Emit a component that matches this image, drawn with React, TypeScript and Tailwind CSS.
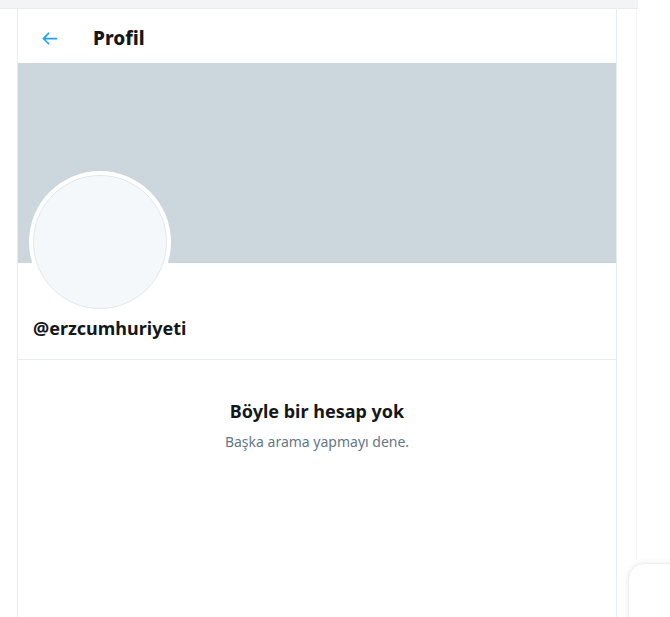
export default function App() {
  return (
    <div className="relative h-[617px] w-[670px] overflow-hidden bg-white" style={{ fontFamily: '"Noto Sans", "Open Sans", sans-serif' }}>
      <div className="h-[9px] w-[638px] border-b border-[#e6ecf0] bg-[#f2f4f6]" />
      <div className="ml-[17px] flex h-[608px] w-[600px] flex-col border-x border-[#e6ecf0]">
        <div className="flex h-[54px] items-center gap-[33px] px-[21px] pt-[4px]">
          <svg viewBox="0 0 24 24" className="h-[21px] w-[21px] text-[#1da1f2]" fill="currentColor">
            <path d="M20 11H7.414l4.293-4.293a1 1 0 0 0-1.414-1.414l-6 6a1 1 0 0 0 0 1.414l6 6a1 1 0 0 0 1.414-1.414L7.414 13H20a1 1 0 1 0 0-2z" />
          </svg>
          <span className="text-[19px] font-extrabold text-[#14171a]">Profil</span>
        </div>
        <div className="h-[200px] bg-[#ccd6dd]" />
        <div className="border-b border-[#e6ecf0] px-[11px] pb-[19px]">
          <div className="-mt-[92px] h-[142px] w-[142px] rounded-full bg-white p-[4px]">
            <div className="h-full w-full rounded-full border border-[#e1e8ed] bg-[#f5f8fa]" />
          </div>
          <div className="mt-[3px] pl-[4px] text-[18px] font-bold leading-[24px] text-[#14171a]">@erzcumhuriyeti</div>
        </div>
        <div className="flex flex-col items-center pt-[37px]">
          <div className="text-[18px] font-bold leading-[28px] text-[#14171a]">Böyle bir hesap yok</div>
          <div className="mt-[7px] text-[14px] leading-[20px] text-[#657786]">Başka arama yapmayı dene.</div>
        </div>
      </div>
      <div className="absolute left-[636px] top-[10px] h-[550px] w-px bg-[#f2f4f6]" />
      <div className="absolute left-[628px] top-[563px] h-[70px] w-[60px] rounded-tl-[16px] border border-[#eef0f2] bg-white shadow-[0_0_6px_rgba(0,0,0,0.08)]" />
    </div>
  );
}
